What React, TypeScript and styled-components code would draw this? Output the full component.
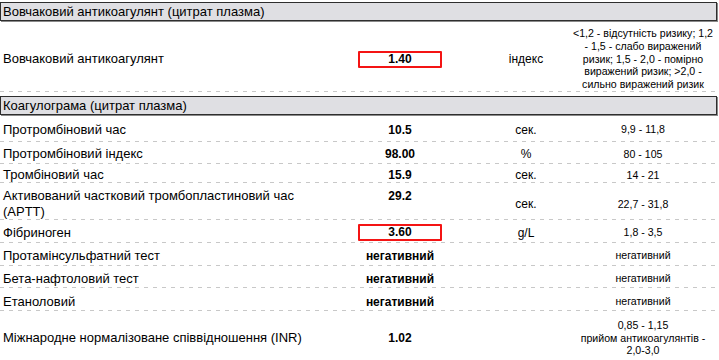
import React from 'react';
import styled, { createGlobalStyle, css } from 'styled-components';

type RowData = {
  name: string;
  value: string;
  unit?: string;
  reference: React.ReactNode;
  h: number;
  padTop?: number;
  flagged?: boolean;
  valueTop?: boolean;
};

type Section = {
  title: string;
  rows: RowData[];
};

const sections: Section[] = [
  {
    title: 'Вовчаковий антикоагулянт (цитрат плазма)',
    rows: [
      {
        name: 'Вовчаковий антикоагулянт',
        value: '1.40',
        unit: 'індекс',
        reference:
          '<1,2 - відсутність ризику; 1,2 - 1,5 - слабо виражений ризик; 1,5 - 2,0 - помірно виражений ризик; >2,0 - сильно виражений ризик',
        h: 71,
        padTop: 6,
        flagged: true,
      },
    ],
  },
  {
    title: 'Коагулограма (цитрат плазма)',
    rows: [
      { name: 'Протромбіновий час', value: '10.5', unit: 'сек.', reference: '9,9 - 11,8', h: 27 },
      { name: 'Протромбіновий індекс', value: '98.00', unit: '%', reference: '80 - 105', h: 22 },
      { name: 'Тромбіновий час', value: '15.9', unit: 'сек.', reference: '14 - 21', h: 19 },
      {
        name: 'Активований частковий тромбопластиновий час (APTT)',
        value: '29.2',
        unit: 'сек.',
        reference: '22,7 - 31,8',
        h: 37,
        padTop: 5,
        valueTop: true,
      },
      { name: 'Фібриноген', value: '3.60', unit: 'g/L', reference: '1,8 - 3,5', h: 23, flagged: true },
      { name: 'Протамінсульфатний тест', value: 'негативний', reference: 'негативний', h: 23 },
      { name: 'Бета-нафтоловий тест', value: 'негативний', reference: 'негативний', h: 22, padTop: 4 },
      { name: 'Етаноловий', value: 'негативний', reference: 'негативний', h: 23, padTop: 5 },
      {
        name: 'Міжнародне нормалізоване співвідношення (INR)',
        value: '1.02',
        reference: (
          <>
            0,85 - 1,15
            <br />
            прийом антикоагулянтів -
            <br />
            2,0-3,0
          </>
        ),
        h: 50,
        padTop: 5,
      },
    ],
  },
];

const GlobalStyle = createGlobalStyle`
  body {
    margin: 0;
    background: #fff;
    color: #000;
    font-family: "Liberation Sans", Arial, sans-serif;
  }
`;

const Styled = {
  Page: styled.div`
    width: 717px;
    padding-top: 2px;
  `,
  Section: styled.section`
    & + & {
      margin-top: 4px;
    }
  `,
  Header: styled.div`
    height: 17px;
    line-height: 17px;
    padding-left: 2px;
    font-size: 13px;
    background: #dfdfe3;
    border: 1px solid #2e2e2e;
    box-shadow: 1px 1px 0 #8a8a8a;
  `,
  Row: styled.div<{ $h: number; $padTop: number }>(
    ({ $h, $padTop }) => css`
      display: grid;
      grid-template-columns: 357px 86px 127px 146px;
      align-items: center;
      box-sizing: border-box;
      height: ${$h}px;
      padding: ${$padTop}px 0 1px;
      background: repeating-linear-gradient(to right, #c8c8c8 0 4px, transparent 4px 9px) left bottom / 100% 1px
        no-repeat;
    `
  ),
  Name: styled.div`
    padding: 0 30px 0 3px;
    font-size: 13px;
    line-height: 16px;
  `,
  Value: styled.div<{ $top?: boolean }>(
    ({ $top }) => css`
      align-self: ${$top ? 'start' : 'center'};
      text-align: center;
      font-size: 12px;
      font-weight: bold;
      line-height: 16px;
    `
  ),
  Flag: styled.div`
    box-sizing: border-box;
    width: 84px;
    height: 17px;
    margin: 0 auto;
    line-height: 13px;
    border: 2px solid #f41414;
    border-radius: 1px;
  `,
  Unit: styled.div`
    padding-left: 39px;
    text-align: center;
    font-size: 12px;
  `,
  Reference: styled.div`
    text-align: center;
    font-size: 10.6px;
    line-height: 12.75px;
  `,
};

const ResultRow = ({ row }: { row: RowData }) => (
  <Styled.Row $h={row.h} $padTop={row.padTop ?? 3}>
    <Styled.Name>{row.name}</Styled.Name>
    <Styled.Value $top={row.valueTop}>
      {row.flagged ? <Styled.Flag>{row.value}</Styled.Flag> : row.value}
    </Styled.Value>
    <Styled.Unit>{row.unit}</Styled.Unit>
    <Styled.Reference>{row.reference}</Styled.Reference>
  </Styled.Row>
);

const App = () => (
  <>
    <GlobalStyle />
    <Styled.Page>
      {sections.map((section) => (
        <Styled.Section key={section.title}>
          <Styled.Header>{section.title}</Styled.Header>
          {section.rows.map((row) => (
            <ResultRow key={row.name} row={row} />
          ))}
        </Styled.Section>
      ))}
    </Styled.Page>
  </>
);

export default App;
